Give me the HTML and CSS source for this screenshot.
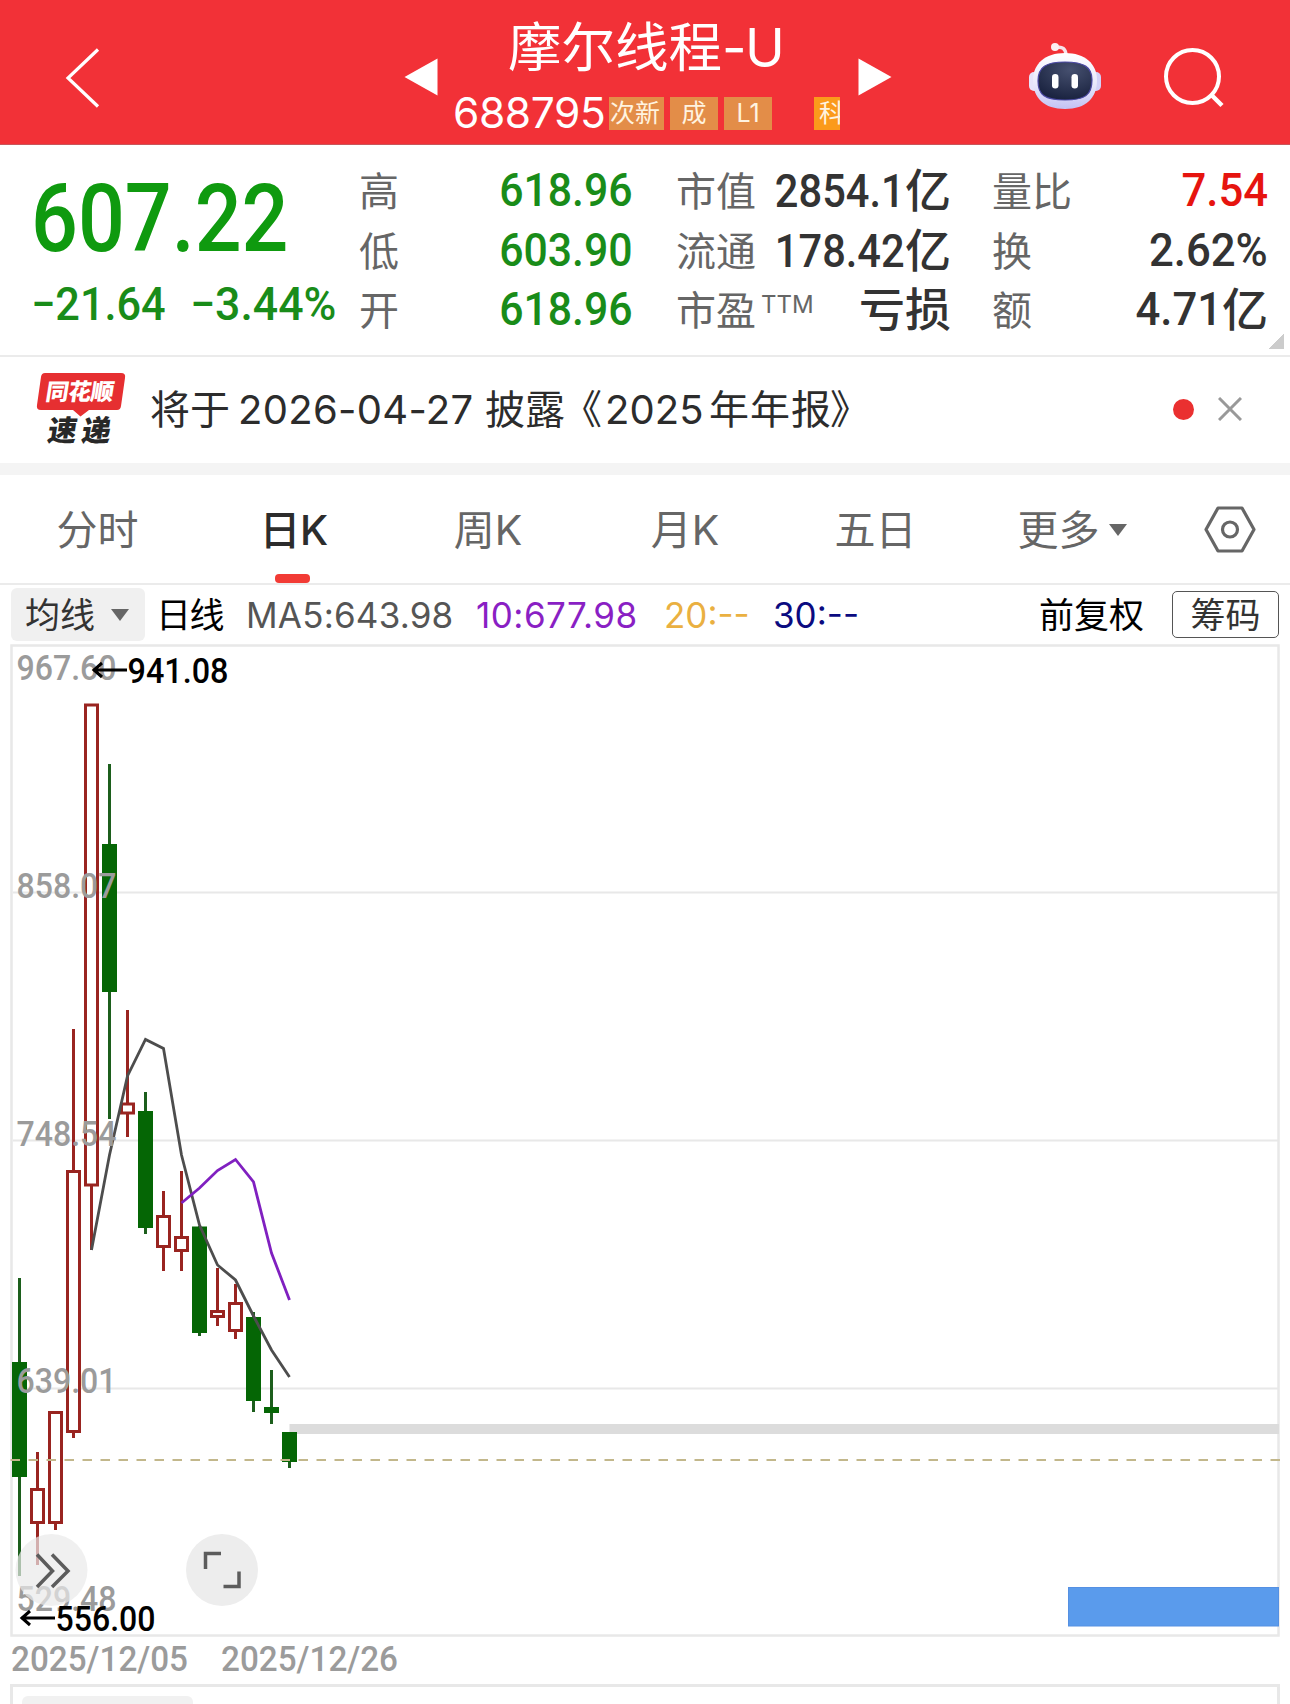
FILE: index.html
```html
<!DOCTYPE html>
<html lang="zh-CN">
<head>
<meta charset="utf-8">
<title>摩尔线程-U 688795</title>
<link rel="stylesheet" href="styles.css">
</head>
<body>
<header class="topbar">
  <svg class="back" width="40" height="64" viewBox="63 46 40 64"><path d="M98 49.500L68 78L98 106.500" fill="none" stroke="#fff" stroke-width="3.200"/></svg>
  <svg class="prev" width="35" height="38" viewBox="0 0 35 38"><path d="M1.500 19L34.500 .5V37.500Z" fill="#fff"/></svg>
  <div class="stock">
    <h1 class="name">摩尔线程<span class="suffix">-U</span></h1>
    <div class="code-row">
      <span class="code">688795</span>
      <span class="tag tag-cut">次新</span>
      <span class="tag">成</span>
      <span class="tag">L1</span>
      <span class="tag tag-board">科</span>
    </div>
  </div>
  <svg class="next" width="35" height="38" viewBox="0 0 35 38"><path d="M33.500 19L.5 .5V37.500Z" fill="#fff"/></svg>
  <svg class="robot" width="74" height="68" viewBox="1028 42 74 68">
    <defs>
      <linearGradient id="shell" x1="0" y1="0" x2="0" y2="1"><stop offset="0" stop-color="#fff"/><stop offset=".55" stop-color="#e9e8fb"/><stop offset="1" stop-color="#c3c2f3"/></linearGradient>
      <radialGradient id="visor" cx=".6" cy=".2" r=".8"><stop offset="0" stop-color="#46506f"/><stop offset="1" stop-color="#1a2340"/></radialGradient>
    </defs>
    <path d="M1056 47.500Q1065.500 45.500 1066 55" fill="none" stroke="#f6e3ea" stroke-width="3.500"/>
    <circle cx="1055" cy="47" r="4" fill="#fbeff2"/>
    <rect x="1029" y="72" width="12" height="19" rx="5" fill="#e6e3fa"/>
    <rect x="1089" y="72" width="12" height="19" rx="5" fill="#d3d1f8"/>
    <path d="M1065 53C1085 53 1097 64 1097 80C1097 98 1086 109 1065 109C1044 109 1033 98 1033 80C1033 64 1045 53 1065 53Z" fill="url(#shell)"/>
    <path d="M1065 62C1084 62 1092 67 1092 80C1092 95 1085 100 1065 100C1045 100 1038 95 1038 81C1038 67 1046 62 1065 62Z" fill="url(#visor)" stroke="#4c4aa5" stroke-width="1.200"/>
    <rect x="1052" y="74" width="6.500" height="14.500" rx="3.200" fill="#fff"/>
    <rect x="1071.500" y="74" width="6.500" height="14.500" rx="3.200" fill="#fff"/>
  </svg>
  <svg class="search" width="62" height="62" viewBox="1162 46 62 62"><circle cx="1192.500" cy="76.500" r="26.500" fill="none" stroke="#fff" stroke-width="4"/><path d="M1211 94.500L1222 105.500" stroke="#fff" stroke-width="4.500"/></svg>
</header>

<section class="quote">
  <div class="price-block">
    <div class="price"><span class="din">607.22</span></div>
    <div class="change"><span class="din">−21.64</span><span class="din pct">−3.44%</span></div>
  </div>
  <dl class="stats stats-a">
    <dt>高</dt><dd class="down"><span class="din">618.96</span></dd>
    <dt>低</dt><dd class="down"><span class="din">603.90</span></dd>
    <dt>开</dt><dd class="down"><span class="din">618.96</span></dd>
  </dl>
  <dl class="stats stats-b">
    <dt>市值</dt><dd><span class="din">2854.1</span><span class="unit">亿</span></dd>
    <dt>流通</dt><dd><span class="din">178.42</span><span class="unit">亿</span></dd>
    <dt>市盈<span class="ttm">TTM</span></dt><dd><span class="unit loss">亏损</span></dd>
  </dl>
  <dl class="stats stats-c">
    <dt>量比</dt><dd class="up"><span class="din">7.54</span></dd>
    <dt>换</dt><dd><span class="din">2.62%</span></dd>
    <dt>额</dt><dd><span class="din">4.71</span><span class="unit">亿</span></dd>
  </dl>
  <i class="corner"></i>
</section>

<section class="notice">
  <div class="brand">
    <svg class="bubble" width="90" height="44" viewBox="36 373 90 44"><path d="M45 373H121Q126 373 125 378L121 406Q120.500 410 117 410H89L80.500 416.500L73 410H41Q36 410 37 405L41 377Q41.500 373 45 373Z" fill="#e62f31"/></svg>
    <span class="brand-top">同花顺</span>
    <span class="brand-bottom">速递</span>
  </div>
  <p class="notice-text"><span>将于</span><span class="date">2026-04-27</span><span>披露</span><span class="quote-open">《</span><span class="year">2025</span><span class="report">年年报</span><span class="quote-close">》</span></p>
  <i class="dot"></i>
  <svg class="close" width="24" height="24" viewBox="0 0 24 24"><path d="M1 1L23 23M23 1L1 23" stroke="#999" stroke-width="3"/></svg>
</section>

<nav class="tabs">
  <span class="tab">分时</span>
  <span class="tab active">日K</span>
  <span class="tab">周K</span>
  <span class="tab">月K</span>
  <span class="tab">五日</span>
  <span class="tab more">更多<i class="caret"></i></span>
  <span class="tab"><svg width="52" height="47" viewBox="0 0 52 47"><path d="M14 2H38L50 23.500L38 45H14L2 23.500Z" fill="none" stroke="#666" stroke-width="3.200" stroke-linejoin="round"/><circle cx="26" cy="23.500" r="7.500" fill="none" stroke="#666" stroke-width="3.200"/></svg></span>
</nav>

<div class="indicators">
  <span class="picker">均线<i class="caret"></i></span>
  <span class="black">日线</span>
  <span class="ma ma5">MA5:643.98</span>
  <span class="ma ma10">10:677.98</span>
  <span class="ma ma20">20:--</span>
  <span class="ma ma30">30:--</span>
  <span class="black">前复权</span>
  <span class="chips">筹码</span>
</div>

<main class="chart">
<svg width="1270" height="1040" viewBox="10 644 1270 1040">
  <rect x="11.500" y="645.500" width="1267" height="990" fill="none" stroke="#e8e8e8" stroke-width="2.500"/>
  <path d="M13 892.500H1278M13 1140.500H1278M13 1388.500H1278" stroke="#e8e8e8" stroke-width="1.800"/>
  <rect x="289.500" y="1424" width="989.500" height="10" fill="#dcdcdc"/>
  <g class="wick-down">
    <path d="M19.500 1278V1576M109.500 764V1119M145.500 1092V1234M199.500 1226V1336M253.500 1312V1412M271.500 1370V1424M289.500 1432V1468"/>
  </g>
  <g class="body-down">
    <rect x="12" y="1362" width="15" height="115"/><rect x="102" y="844" width="15" height="148"/>
    <rect x="138" y="1111" width="15" height="117"/><rect x="192" y="1226.500" width="15" height="106.500"/>
    <rect x="246" y="1317" width="15" height="84"/><rect x="264" y="1407" width="15" height="6"/>
    <rect x="282" y="1432" width="15" height="30"/>
  </g>
  <path class="wick-up" d="M37.500 1452V1488M37.500 1524V1565M55.500 1524V1530M73.500 1029V1170M73.500 1433V1438M91.500 1186V1250M127.500 1010V1103M127.500 1114V1137M163.500 1191V1215M163.500 1247V1271M181.500 1171V1236M181.500 1251V1271M217.500 1268V1310M217.500 1318V1326M235.500 1284V1302M235.500 1331V1339"/>
  <g class="body-up">
    <rect x="31.500" y="1489.500" width="12" height="33"/><rect x="49.500" y="1412.500" width="12" height="110"/>
    <rect x="67.500" y="1171.500" width="12" height="260"/><rect x="85.500" y="705" width="12" height="480"/>
    <rect x="121.500" y="1104" width="12" height="9"/><rect x="157.500" y="1216.500" width="12" height="30"/>
    <rect x="175.500" y="1237.500" width="12" height="13"/><rect x="211.500" y="1311.500" width="12" height="5"/>
    <rect x="229.500" y="1303.500" width="12" height="27"/>
  </g>
  <polyline points="91.500,1250 109.500,1155 127.500,1076 145.500,1039.500 163.500,1048.500 181.500,1155 199.500,1225 217.500,1265 235.500,1280 253.500,1316 271.500,1350 289.500,1377" fill="none" stroke="#4d4d4d" stroke-width="2.800"/>
  <polyline points="181.500,1203 199.500,1188 217.500,1170.500 235.500,1159.500 253.500,1182 271.500,1253 289.500,1300" fill="none" stroke="#8020c0" stroke-width="2.800"/>
  <path d="M10.500 1460H1280" stroke="#c2b78b" stroke-width="1.800" stroke-dasharray="9.500 8.500"/>
  <rect x="1068.500" y="1587.500" width="210" height="38.500" fill="#5a9bec" stroke="#5590e2"/>
  <g class="axis">
    <text x="16.500" y="680" textLength="100" lengthAdjust="spacingAndGlyphs">967.60</text>
    <text x="16.500" y="898" textLength="100" lengthAdjust="spacingAndGlyphs">858.07</text>
    <text x="16.500" y="1146" textLength="100" lengthAdjust="spacingAndGlyphs">748.54</text>
    <text x="16.500" y="1393" textLength="100" lengthAdjust="spacingAndGlyphs">639.01</text>
    <text x="16.500" y="1611" textLength="100" lengthAdjust="spacingAndGlyphs">529.48</text>
    <text x="11" y="1671" textLength="177" lengthAdjust="spacingAndGlyphs">2025/12/05</text>
    <text x="221" y="1671" textLength="177" lengthAdjust="spacingAndGlyphs">2025/12/26</text>
  </g>
  <g fill="none" stroke="#5c5c5c" stroke-width="3.500">
    <circle cx="51.500" cy="1570" r="36" fill="#e9e9e9" fill-opacity=".7" stroke="none"/>
    <circle cx="222" cy="1570" r="36" fill="#ededed" stroke="none"/>
    <path d="M37 1554.500L52.500 1571L37 1587M52 1554.500L68 1571L52 1587"/>
    <path d="M205.500 1569V1553.500H221M239 1571.500V1586.500H223.500"/>
  </g>
  <g class="extreme">
    <path d="M93 670H127M102 663L94 670L102 677M21 1618H55M30 1611L22 1618L30 1625"/>
    <text x="127.500" y="683" textLength="101" lengthAdjust="spacingAndGlyphs">941.08</text>
    <text x="55.500" y="1631" textLength="100" lengthAdjust="spacingAndGlyphs">556.00</text>
  </g>
</svg>
</main>

<section class="subpanel"><span class="subpicker"></span></section>
</body>
</html>
```
FILE: styles.css
```css
* { box-sizing: border-box; }
body {
  margin: 0;
  width: 1290px;
  height: 1704px;
  overflow: hidden;
  background: #fff;
  color: #333;
  font-family: Inter, "Noto Sans CJK SC", sans-serif;
  font-weight: 400;
}
svg { display: block; flex: none; }
i { display: block; }

.topbar {
  height: 145px;
  background: #f23137;
  border-bottom: 1px solid #c9565a;
  color: #fff;
  display: flex;
  align-items: flex-start;
}
.back { margin: 46px 300px 0 63px; }
.prev, .next { margin-top: 58px; }
.stock { width: 420px; padding-left: 17px; }
.name {
  margin: 15px 0 0;
  padding-left: 53px;
  font-size: 53.500px;
  line-height: 66px;
  font-weight: 400;
  white-space: nowrap;
}
.suffix { letter-spacing: -1.500px; }
.code-row { display: flex; margin-top: 16px; height: 33px; gap: 6px; }
.code {
  width: 148px;
  margin-left: -2px;
  margin-right: 2px;
  font-size: 42.500px;
  line-height: 31px;
  letter-spacing: -.4px;
}
.tag {
  width: 48px;
  height: 33px;
  background: #e38d48;
  color: #fff3e0;
  font-size: 25px;
  line-height: 33px;
  text-align: center;
  overflow: hidden;
  white-space: nowrap;
}
.tag-cut { width: 55px; text-indent: -3px; }
.tag-board { width: 26px; margin-left: 36px; background: #fb9a1b; text-align: left; padding-left: 5px; }
.robot { margin: 42px 60px 0 135px; }
.search { margin-top: 46px; }

.quote {
  height: 212px;
  border-bottom: 2px solid #ebebeb;
  display: flex;
  position: relative;
}
.din { display: inline-block; font-family: Roboto, sans-serif; font-weight: 500; transform-origin: 0 50%; white-space: nowrap; }
.price-block { width: 360px; padding-left: 31px; color: #0f9a0f; }
.price { height: 109px; margin-top: 18px; line-height: 109px; font-size: 94px; }
.price .din { transform: scaleX(.878); }
.change { display: flex; font-size: 46px; line-height: 52px; margin-top: 6px; color: #198c19; }
.change .din { width: 159px; transform: scaleX(.94); }
.change .pct { transform: scaleX(.97); }
.stats { margin: 16px 0 0; display: grid; grid-template-rows: 60px 59px 60px; font-size: 40px; line-height: 62px; }
.stats dt { color: #666; white-space: nowrap; }
.stats dd { margin: 0; display: flex; justify-content: flex-end; font-size: 47px; line-height: 57px; white-space: nowrap; }
.stats .din { transform: scaleX(.91); transform-origin: 100% 50%; }
.stats-a { width: 273px; grid-template-columns: 60px 1fr; margin-left: -1px; }
.stats-a dd { margin-right: -1px; }
.stats-b { width: 273px; margin-left: 44px; grid-template-columns: 76px 1fr; }
.stats-b dd { margin-right: -2px; line-height: 59px; }
.stats-b .din { transform: scaleX(.885); }
.stats-c { width: 276px; margin-left: 43px; grid-template-columns: 82px 1fr; }
.stats-c .din { transform: scaleX(.93); }
.down { color: #198c19; }
.up { color: #e6140f; }
.unit { font-size: 46px; font-weight: 500; line-height: 58px; }
.ttm { font-size: 24px; line-height: 0; position: relative; top: -12px; margin-left: 5px; }
.corner { position: absolute; right: 6px; bottom: 6px; width: 15px; height: 15px; background: linear-gradient(135deg, transparent 50%, #ccc 50%); }

.notice { height: 106px; display: flex; align-items: flex-start; }
.brand { width: 116px; height: 106px; padding: 16px 0 0 36px; position: relative; }
.brand-top, .brand-bottom { position: absolute; font-weight: 900; transform: skewX(-9deg); white-space: nowrap; }
.brand-top { left: 46px; top: 17px; font-size: 23px; line-height: 36px; color: #fff; letter-spacing: -.5px; }
.brand-bottom { left: 48px; top: 56px; font-size: 29px; line-height: 36px; letter-spacing: 5px; color: #282828; }
.notice-text { display: flex; margin: 23px 0 0 34px; width: 1023px; font-size: 40px; line-height: 60px; color: #2c2c2c; white-space: nowrap; }
.date { margin-left: 8px; width: 247px; letter-spacing: .3px; }
.quote-open { margin-left: -3px; }
.year { margin-left: 3px; width: 104px; letter-spacing: .1px; }
.report { letter-spacing: 1px; }
.quote-close { margin-left: -2px; }
.dot { width: 21px; height: 21px; border-radius: 50%; background: #ea3030; margin-top: 42px; flex: none; }
.close { margin: 40px 0 0 24px; }

.tabs {
  height: 122px;
  border-top: 12px solid #f4f4f4;
  border-bottom: 2px solid #ebebeb;
  display: grid;
  grid-template-columns: 195px 201px 184px 210px 171px 222px 94px;
  color: #666;
  font-size: 41px;
}
.tab { display: flex; justify-content: center; align-items: center; position: relative; height: 108px; line-height: 112px; padding-top: 2px; }
.tab:last-child { padding-top: 0; }
.tab.active { color: #2c2c2c; font-weight: 500; left: -2px; letter-spacing: -.5px; }
.active::after { content: ""; position: absolute; left: 82px; bottom: 0; width: 35px; height: 9px; border-radius: 4px; background: #f23b35; }
.caret { border: 9px solid transparent; border-top: 12px solid #666; border-bottom: 0; }
.more .caret { margin-left: 9px; }

.indicators {
  height: 59px;
  padding-left: 11px;
  display: grid;
  grid-template-columns: 145px 90px 230px 188px 109px 266px 133px 107px;
  align-items: center;
  font-size: 35px;
  line-height: 56px;
  white-space: nowrap;
}
.picker { width: 134px; height: 53px; background: #f0f0f0; border-radius: 6px; padding-left: 14px; display: flex; align-items: center; color: #333; }
.picker .caret { margin-left: 16px; }
.black { color: #000; }
.indicators .black:nth-child(2) { letter-spacing: -1.500px; }
.ma5 { color: #555; letter-spacing: .2px; }
.ma10 { color: #8a1fc4; letter-spacing: .5px; }
.ma20 { color: #eab041; }
.ma30 { color: #0b0b80; }
.chips { height: 47px; line-height: 46px; border: 1.500px solid #555; border-radius: 5px; text-align: center; }

.chart { height: 1040px; padding-left: 10px; }
.wick-down { stroke: #1c5e1c; stroke-width: 3; fill: none; }
.body-down { fill: #056605; }
.wick-up { stroke: #992420; stroke-width: 3; fill: none; }
.body-up { fill: #fff; stroke: #992420; stroke-width: 3; }
.axis text { font: 500 35px Roboto, sans-serif; fill: #9b9b9b; }
.extreme text { font: 500 35px Roboto, sans-serif; fill: #000; }
.extreme path { fill: none; stroke: #000; stroke-width: 3; }

.subpanel { height: 20px; margin: 0 10px; border: 3px solid #e8e8e8; border-bottom: 0; padding: 9px 0 0 9px; overflow: hidden; }
.subpicker { display: block; width: 171px; height: 20px; background: #f1f1f1; border-radius: 6px; }
```
